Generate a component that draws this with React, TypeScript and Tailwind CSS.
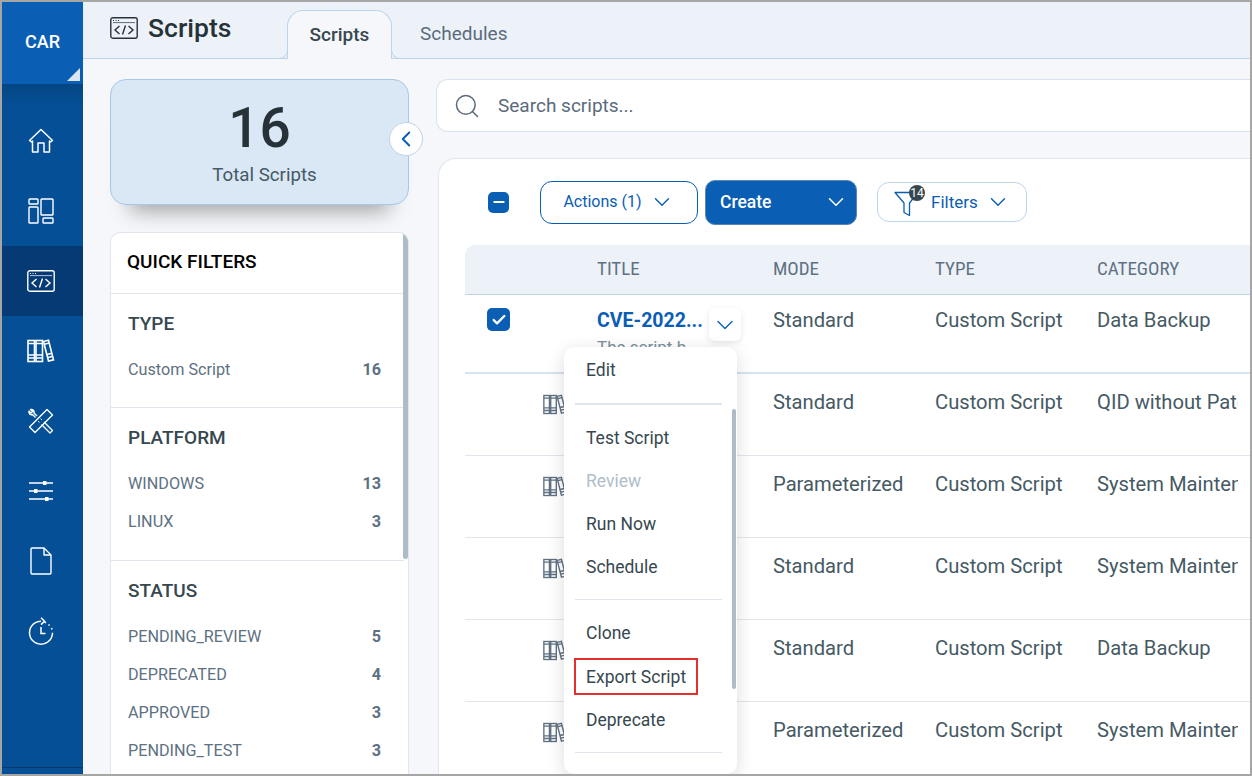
import { ChevronDown, ChevronLeft, Search, Check, Minus } from 'lucide-react'

type IconProps = { className?: string }

function ScriptIcon({ className }: IconProps) {
  return (
    <svg viewBox="0 0 28 22" fill="none" stroke="currentColor" strokeWidth="1.4" className={className}>
      <rect x="0.8" y="0.8" width="26.4" height="20.4" rx="2" />
      <path d="M3 3.5h1M5.5 3.5h1M8 3.5h1" strokeWidth="1.2" />
      <path d="M3 5.6h22" strokeWidth="0.7" />
      <path d="M9.5 9l-4.5 4 4.5 4M18.5 9l4.5 4-4.5 4M15.5 8.5l-3 9" />
    </svg>
  )
}

function HomeIcon({ className }: IconProps) {
  return (
    <svg viewBox="0 0 26 26" fill="none" stroke="currentColor" strokeWidth="1.5" strokeLinejoin="round" className={className}>
      <path d="M1.5 12.5L13 1.5l11.5 11-2 1.5-1-1v11h-5.5v-9h-6v9H4.500v-11l-1 1z" />
    </svg>
  )
}

function DashIcon({ className }: IconProps) {
  return (
    <svg viewBox="0 0 26 26" fill="none" stroke="currentColor" strokeWidth="1.4" className={className}>
      <rect x="1" y="1" width="9" height="5" rx="0.8" />
      <rect x="1" y="9" width="9" height="16" rx="0.8" />
      <rect x="13" y="1" width="12" height="16" rx="0.8" />
      <rect x="15" y="20" width="10" height="5" rx="0.8" />
    </svg>
  )
}

function BooksIcon({ className }: IconProps) {
  return (
    <svg viewBox="0 0 28 24" fill="none" stroke="currentColor" strokeWidth="1.6" className={className}>
      <rect x="1" y="1.500" width="6.500" height="21" />
      <rect x="9" y="1.500" width="6.500" height="21" />
      <path d="M16.500 2.500l5-1.200 5 19.500-5 1.200z" />
      <path d="M1 4.500h6.500M9 4.500h6.500M17.200 5.200l5-1.200M1 16h6.500M1 19h6.500M9 16h6.500M9 19h6.500M20 15.500l4.800-1.200M21 18.500l4.800-1.200" />
    </svg>
  )
}

function ToolsIcon({ className }: IconProps) {
  return (
    <svg viewBox="0 0 26 26" fill="none" stroke="currentColor" strokeWidth="1.4" strokeLinejoin="round" className={className}>
      <path d="M1.500 19l17.500-17.500 5.500 5.500-17.500 17.500z" />
      <path d="M10 13l1.500 1.500M12.500 10.500l1.500 1.500" strokeWidth="1" />
      <path d="M9 8L6 5c.6-2.200-1.200-4-3.400-3.500l2 2-1.600 1.600-2-2C.500 5.400 2.400 7.200 4.500 6.500L7.500 9.500" />
      <path d="M16 14l8.500 8.500-2.500 2.500-8.500-8.500" />
    </svg>
  )
}

function SlidersIcon({ className }: IconProps) {
  return (
    <svg viewBox="0 0 26 22" fill="none" stroke="currentColor" strokeWidth="1.3" className={className}>
      <path d="M1 3h24M1 11h24M1 19h24" />
      <rect x="15" y="1" width="3.500" height="4" fill="currentColor" stroke="none" />
      <rect x="6" y="9" width="3.500" height="4" fill="currentColor" stroke="none" />
      <rect x="17" y="17" width="3.500" height="4" fill="currentColor" stroke="none" />
    </svg>
  )
}

function FileIcon({ className }: IconProps) {
  return (
    <svg viewBox="0 0 22 28" fill="none" stroke="currentColor" strokeWidth="1.4" strokeLinejoin="round" className={className}>
      <path d="M2 1h12l7 7v18a1 1 0 0 1-1 1H2a1 1 0 0 1-1-1V2a1 1 0 0 1 1-1z" />
      <path d="M14 1v7h7" />
    </svg>
  )
}

function HistoryIcon({ className }: IconProps) {
  return (
    <svg viewBox="0 0 26 28" fill="none" stroke="currentColor" strokeWidth="1.5" className={className}>
      <path d="M13 4.200A11.500 11.500 0 1 0 24.500 15.700" />
      <path d="M16.500 5l1.500.7M20.500 7.500l1 1M23.500 11l.5 1.500" />
      <path d="M13 0.800l3.500 3.400-3.500 3.400" />
      <path d="M13 10v6.500h4.500" />
    </svg>
  )
}

function FunnelIcon({ className }: IconProps) {
  return (
    <svg viewBox="0 0 26 26" fill="none" stroke="currentColor" strokeWidth="1.3" strokeLinejoin="round" className={className}>
      <path d="M1 1.500h23L15.500 12v12.500L10 21.500V12z" />
    </svg>
  )
}

const navItems = [
  { icon: HomeIcon, size: 'w-[26px] h-[26px]' },
  { icon: DashIcon, size: 'w-[26px] h-[26px]' },
  { icon: ScriptIcon, size: 'w-[28px] h-[22px]', active: true },
  { icon: BooksIcon, size: 'w-[28px] h-[24px]' },
  { icon: ToolsIcon, size: 'w-[26px] h-[26px]' },
  { icon: SlidersIcon, size: 'w-[26px] h-[22px]' },
  { icon: FileIcon, size: 'w-[22px] h-[28px]' },
  { icon: HistoryIcon, size: 'w-[26px] h-[28px]' },
]

const filterSections = [
  { title: 'TYPE', pb: 'pb-[18px]', items: [['Custom Script', 16]] },
  { title: 'PLATFORM', pb: 'pb-[19px]', items: [['WINDOWS', 13], ['LINUX', 3]] },
  {
    title: 'STATUS',
    pb: 'pb-[19px]',
    items: [['PENDING_REVIEW', 5], ['DEPRECATED', 4], ['APPROVED', 3], ['PENDING_TEST', 3]],
  },
]

const rows = [
  { mode: 'Standard', type: 'Custom Script', category: 'QID without Patch' },
  { mode: 'Parameterized', type: 'Custom Script', category: 'System Maintenance' },
  { mode: 'Standard', type: 'Custom Script', category: 'System Maintenance' },
  { mode: 'Standard', type: 'Custom Script', category: 'Data Backup' },
  { mode: 'Parameterized', type: 'Custom Script', category: 'System Maintenance' },
]

const rowGrid = 'grid grid-cols-[132px_176px_162px_162px_141px]'

function MenuItem({ label, muted, boxed }: { label: string; muted?: boolean; boxed?: boolean }) {
  return (
    <div className={`h-[43.2px] pl-[22px] flex items-center text-[17.5px] ${muted ? 'text-[#b0bec9]' : 'text-[#37474f]'}`}>
      {boxed ? (
        <span className="-ml-[12px] px-[10px] h-[37px] flex items-center border-2 border-[#e62e2d]">{label}</span>
      ) : (
        label
      )}
    </div>
  )
}

export default function App() {
  return (
    <div className="w-[1252px] h-[776px] overflow-hidden flex border-2 border-[#a6a6a6] bg-[#f5f7fa] font-['Roboto',sans-serif]">
      {/* Sidebar */}
      <aside className="w-[81px] shrink-0 flex flex-col bg-[#054f96] text-white">
        <div className="relative h-[82px] bg-[#0a5eb4] flex items-center justify-center pb-[4px] text-[18px] font-medium">
          CAR
          <svg viewBox="0 0 13 13" className="absolute right-[3px] bottom-[3px] w-[13px] h-[13px]">
            <path d="M13 0v13H0z" fill="#dbe6f3" />
          </svg>
        </div>
        <div className="h-[22px] bg-gradient-to-b from-[#044683] to-[#054f96]" />
        <nav className="flex flex-col">
          {navItems.map((item, i) => (
            <div key={i} className={`h-[70px] flex items-center justify-center pr-[4px] ${item.active ? 'bg-[#053a75]' : ''}`}>
              <item.icon className={item.size} />
            </div>
          ))}
        </nav>
        <div className="mt-auto h-[7px] border-t border-[#043a70]" />
      </aside>

      <div className="flex-1 min-w-0 flex flex-col">
        {/* Header with tabs */}
        <header className="h-[57px] shrink-0 bg-[#edf2f9] border-b border-[#bcd4ec] flex pl-[27px]">
          <div className="w-[177px] flex items-start gap-[10px] pt-[15px] text-[#263238]">
            <ScriptIcon className="w-[28px] h-[22px]" />
            <span className="text-[26.5px] leading-[22px] font-medium">Scripts</span>
          </div>
          <div className="relative mt-[8px] w-[105px] h-[49px] bg-[#f5f7fa] border border-b-0 border-[#bcd4ec] rounded-t-[16px] flex items-center justify-center text-[19px] font-medium text-[#37474f]">
            Scripts
            <span className="absolute left-[-9px] bottom-0 w-[9px] h-[9px] border-r border-b border-[#bcd4ec] rounded-br-[9px]" />
            <span className="absolute right-[-9px] bottom-0 w-[9px] h-[9px] border-l border-b border-[#bcd4ec] rounded-bl-[9px]" />
          </div>
          <div className="ml-[28px] mt-[8px] h-[49px] flex items-center text-[19px] text-[#5b6b7b]">Schedules</div>
        </header>

        <div className="flex-1 min-h-0 flex pl-[27px] pt-[20px] gap-[27px]">
          {/* Left column */}
          <div className="w-[299px] shrink-0 flex flex-col">
            <div className="relative h-[126px] shrink-0 rounded-[16px] border border-[#a9c8e8] bg-[#dae7f5] shadow-[0_26px_20px_-20px_rgba(0,0,0,0.35)] flex flex-col items-center">
              <div className="mt-[16px] text-[55px] leading-[64px] font-medium text-[#263238]">16</div>
              <div className="mt-[3px] pl-[10px] text-[18.7px] leading-[24px] text-[#455a64]">Total Scripts</div>
              <button className="absolute right-[-15px] top-[42px] w-[34px] h-[34px] rounded-full bg-white border border-[#bcd4ec] flex items-center justify-center text-[#0a5eb4]">
                <ChevronLeft className="w-[26px] h-[26px]" strokeWidth={1.8} />
              </button>
            </div>

            <div className="relative mt-[27px] flex-1 min-h-0 overflow-hidden bg-white border border-b-0 border-[#e1e6ec] rounded-t-[10px]">
              <div className="h-[61px] flex items-center pl-[16px] pb-[2px] border-b border-[#e1e6ec] text-[19px] font-medium text-black mr-[4px]">
                QUICK FILTERS
              </div>
              {filterSections.map((section) => (
                <div key={section.title} className={`pl-[17px] pr-[23px] pt-[16px] ${section.pb} mr-[4px] border-b border-[#e1e6ec] last:border-b-0`}>
                  <div className="h-[28px] flex items-center text-[19px] font-medium text-[#37474f]">{section.title}</div>
                  <div className="mt-[13px] flex flex-col">
                    {section.items.map(([label, count]) => (
                      <div key={label} className="h-[38px] flex items-center justify-between text-[16.2px] text-[#5d7183]">
                        <span>{label}</span>
                        <span className="font-bold">{count}</span>
                      </div>
                    ))}
                  </div>
                </div>
              ))}
              <div className="absolute right-0 top-0 w-[5px] h-[326px] bg-[#adbcc6] rounded-full" />
            </div>
          </div>

          {/* Right column */}
          <div className="flex-1 min-w-0 flex flex-col">
            <div className="h-[53px] shrink-0 bg-white border border-r-0 border-[#d9e2ec] rounded-l-[12px] flex items-center pl-[16px] gap-[17px]">
              <Search className="w-[28px] h-[28px] text-[#5b6b7b]" strokeWidth={1.3} />
              <span className="pt-[1px] text-[19px] text-[#5b6b7b]">Search scripts...</span>
            </div>

            <div className="relative mt-[26px] ml-[2px] flex-1 min-h-0 bg-white border border-r-0 border-b-0 border-[#e1e6ec] rounded-tl-[18px] pl-[26px]">
              {/* Toolbar */}
              <div className="h-[86px] flex items-center pl-[23px]">
                <span className="w-[21px] h-[21px] rounded-[5px] bg-[#0a5eb4] flex items-center justify-center text-white">
                  <Minus className="w-[16px] h-[16px]" strokeWidth={3} />
                </span>
                <button className="ml-[31px] w-[158px] h-[43px] rounded-[12px] border border-[#0a5eb4] flex items-center justify-center gap-[7px] text-[16px] text-[#0a5eb4]">
                  Actions (1)
                  <ChevronDown className="w-[26px] h-[26px]" strokeWidth={1.3} />
                </button>
                <button className="ml-[7px] w-[152px] h-[45px] rounded-[10px] bg-[#0a5eb4] border border-[#5b86b4] flex items-center justify-between pl-[14px] pr-[7px] text-[17.5px] font-medium text-white">
                  Create
                  <ChevronDown className="w-[26px] h-[26px]" strokeWidth={1.4} />
                </button>
                <button className="relative ml-[20px] w-[150px] h-[40px] rounded-[12px] border border-[#bcd4ec] flex items-center pl-[16px] text-[17px] text-[#0a5eb4]">
                  <FunnelIcon className="w-[26px] h-[26px] mt-[3px]" />
                  <span className="absolute left-[31px] top-[2px] w-[16px] h-[16px] rounded-full bg-[#37474f] text-white text-[12px] leading-[16px] text-center">14</span>
                  <span className="ml-[11px] pt-[1px]">Filters</span>
                  <ChevronDown className="ml-[7px] w-[26px] h-[26px]" strokeWidth={1.3} />
                </button>
              </div>

              {/* Table header */}
              <div className={`${rowGrid} h-[50px] items-center bg-[#edf2f9] border-b border-[#bcd4ec] rounded-tl-[10px] text-[19px] text-[#5f7182] [font-stretch:75%]`}>
                <span />
                <span>TITLE</span>
                <span>MODE</span>
                <span>TYPE</span>
                <span>CATEGORY</span>
              </div>

              {/* Selected row */}
              <div className={`${rowGrid} h-[79px] border-b-2 border-[#d5e2f0] text-[20.2px] text-[#455a64]`}>
                <div className="pl-[22px] pt-[13px]">
                  <span className="w-[23px] h-[23px] rounded-[5px] bg-[#0a5eb4] flex items-center justify-center text-white">
                    <Check className="w-[16px] h-[16px]" strokeWidth={3.5} />
                  </span>
                </div>
                <div className="relative pt-[13px]">
                  <div className="text-[19.5px] leading-[26px] font-bold text-[#0a5eb4]">CVE-2022...</div>
                  <div className="text-[17px] leading-[26px] text-[#78909c]">The script h</div>
                  <button className="absolute left-[112px] top-[13px] w-[32px] h-[33px] rounded-[6px] bg-white shadow-[0_2px_6px_rgba(0,0,0,0.1)] flex items-center justify-center text-[#0a5eb4]">
                    <ChevronDown className="w-[28px] h-[28px]" strokeWidth={1.2} />
                  </button>
                </div>
                <div className="pt-[12px] leading-[26px]">Standard</div>
                <div className="pt-[12px] leading-[26px]">Custom Script</div>
                <div className="pt-[12px] leading-[26px]">Data Backup</div>
              </div>

              {rows.map((row, i) => (
                <div key={i} className={`${rowGrid} h-[82px] border-b border-[#e1e6ec] text-[20.2px] text-[#455a64]`}>
                  <div className="col-start-2 pt-[20px] text-[#5f7182] -ml-[54px]">
                    <BooksIcon className="w-[24px] h-[21px]" />
                  </div>
                  <div className="pt-[15px] leading-[26px]">{row.mode}</div>
                  <div className="pt-[15px] leading-[26px]">{row.type}</div>
                  <div className="pt-[15px] leading-[26px] whitespace-nowrap overflow-hidden">{row.category}</div>
                </div>
              ))}

              {/* Row action menu */}
              <div className="absolute left-[125px] top-[188px] w-[173px] h-[427px] pt-[2px] rounded-[10px] bg-white shadow-[0_4px_18px_rgba(0,0,0,0.14)]">
                <MenuItem label="Edit" />
                <div className="ml-[11px] mr-[15px] mt-[11px] mb-[11px] border-t-2 border-[#e1e6ec]" />
                <MenuItem label="Test Script" />
                <MenuItem label="Review" muted />
                <MenuItem label="Run Now" />
                <MenuItem label="Schedule" />
                <div className="ml-[11px] mr-[15px] mt-[10px] mb-[12px] border-t border-[#e1e6ec]" />
                <MenuItem label="Clone" />
                <MenuItem label="Export Script" boxed />
                <MenuItem label="Deprecate" />
                <div className="ml-[11px] mr-[15px] mt-[10px] border-t border-[#e1e6ec]" />
                <div className="absolute right-[1px] top-[62px] w-[4px] h-[280px] rounded-full bg-[#adbcc6]" />
              </div>
            </div>
          </div>
        </div>
      </div>
    </div>
  )
}
